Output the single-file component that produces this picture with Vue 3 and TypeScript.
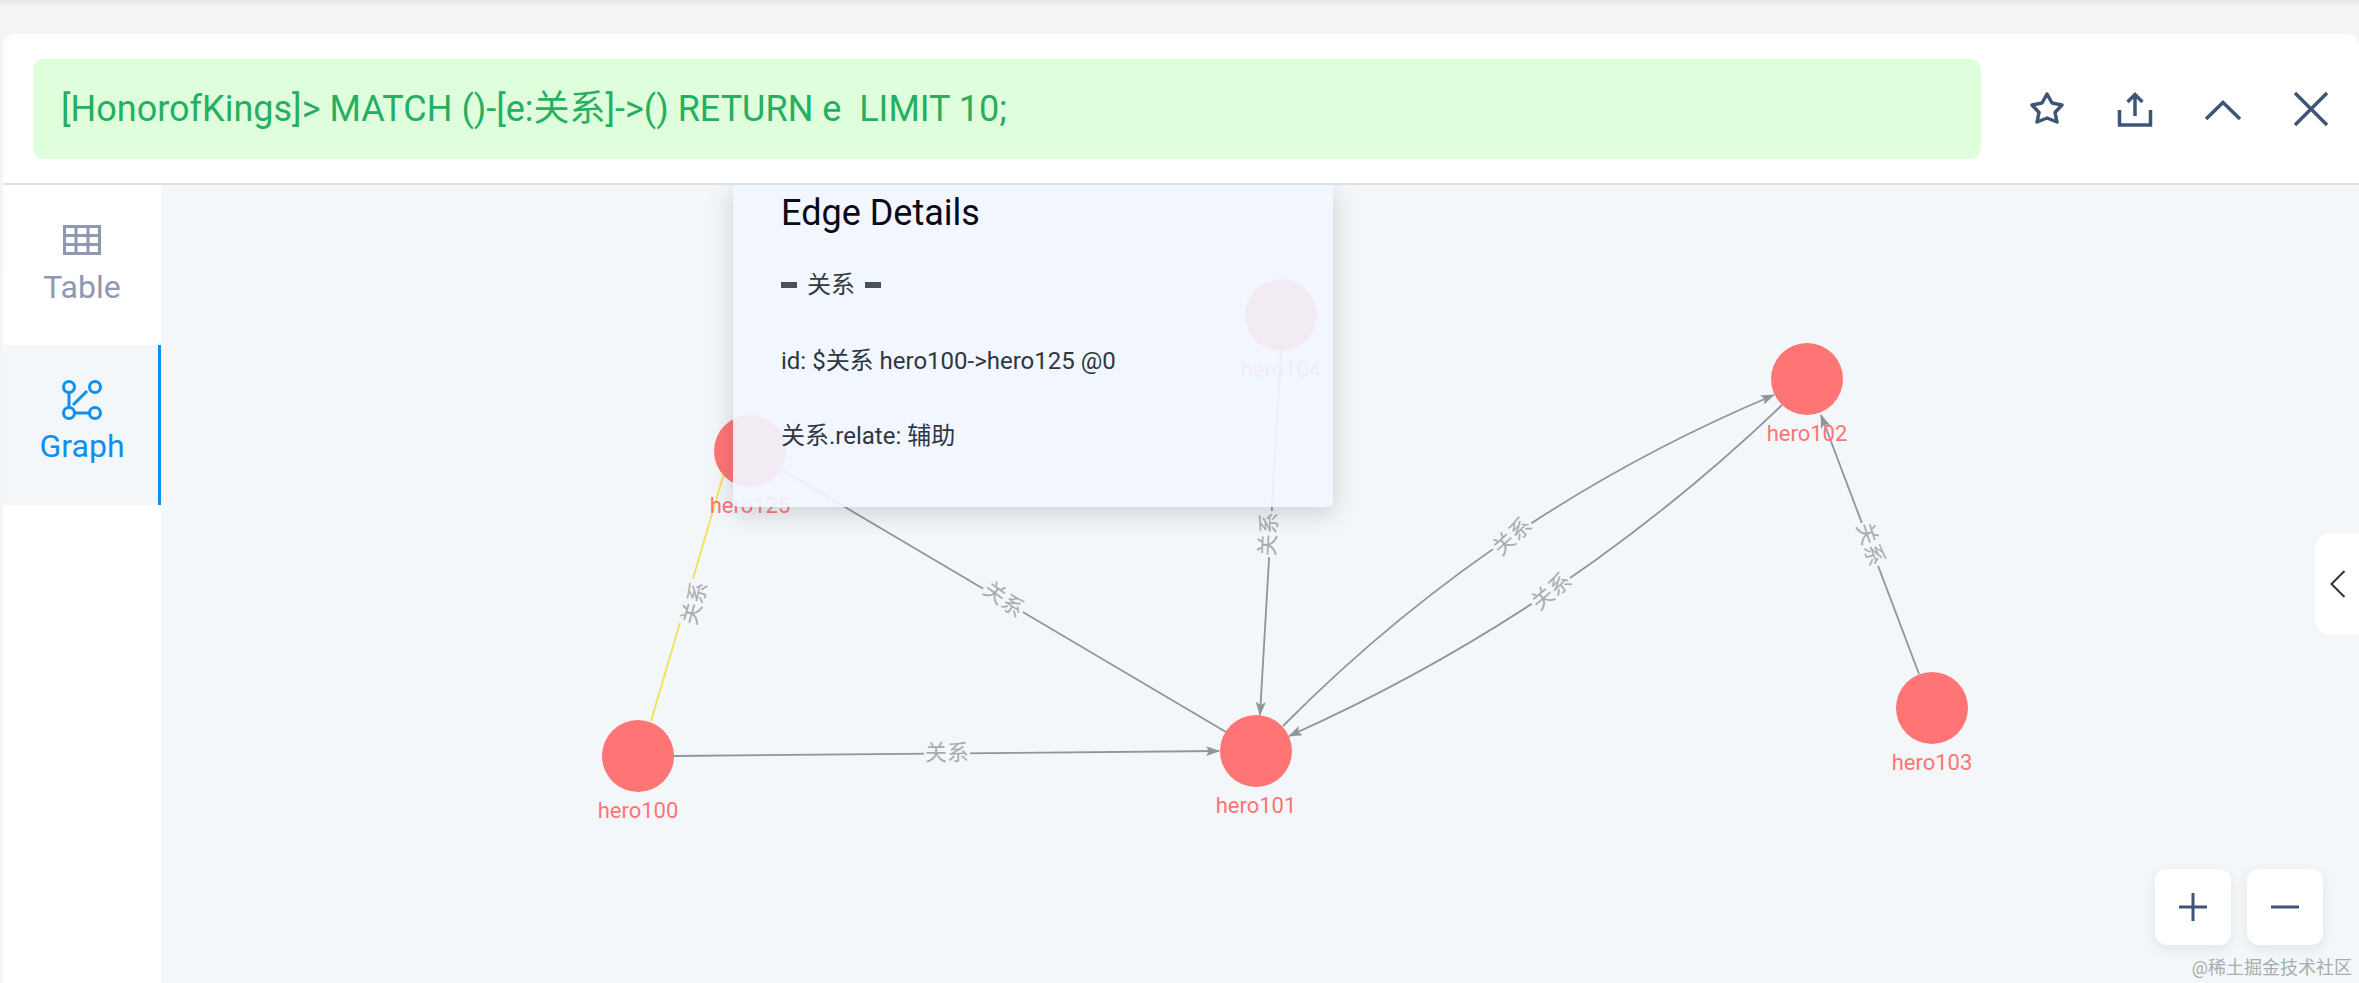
<script setup lang="ts">
interface GraphNode {
  name: string;
  x: number;
  y: number;
}

interface GraphEdge {
  d: string;
  color: string;
  arrow: boolean;
  lx: number;
  ly: number;
  angle: number;
}

// coordinates are page pixels, the svg group shifts them into the canvas
const nodes: GraphNode[] = [
  { name: 'hero125', x: 750, y: 452 },
  { name: 'hero104', x: 1281, y: 316 },
  { name: 'hero100', x: 638, y: 757 },
  { name: 'hero101', x: 1256, y: 752 },
  { name: 'hero102', x: 1807, y: 380 },
  { name: 'hero103', x: 1932, y: 709 },
];

const edges: GraphEdge[] = [
  { d: 'M651 722L740 420', color: '#f5e050', arrow: false, lx: 694, ly: 604, angle: -74 },
  { d: 'M750 452L1226 733', color: '#8f9598', arrow: false, lx: 1004, ly: 600, angle: 36 },
  { d: 'M1281 352L1260 716', color: '#8f9598', arrow: true, lx: 1268, ly: 535, angle: -87 },
  { d: 'M674 757L1219 752', color: '#8f9598', arrow: true, lx: 947, ly: 753, angle: 0 },
  { d: 'M1283 727Q1495 513 1774 396', color: '#8f9598', arrow: true, lx: 1512, ly: 537, angle: -42 },
  { d: 'M1782 406Q1566 613 1289 737', color: '#8f9598', arrow: true, lx: 1551, ly: 592, angle: -40 },
  { d: 'M1919 675L1821 416', color: '#8f9598', arrow: true, lx: 1871, ly: 545, angle: 72 },
];
</script>

<template>
  <div class="page">
    <div class="card">
      <header class="query-bar">
        <div class="query">[HonorofKings]&gt; MATCH ()-[e:关系]-&gt;() RETURN e&nbsp; LIMIT 10;</div>
        <div class="actions">
          <svg width="36" height="36" viewBox="0 0 36 36" class="act">
            <path d="M18 3l5 9 10 2-7 7.500 2 9.500-10-4-10 4 2-9.500-7-7.500 10-2z" stroke-linejoin="round" />
          </svg>
          <svg width="36" height="36" viewBox="0 0 36 36" class="act">
            <path d="M18 25V4M10.500 11L18 3.500 25.500 11M2.500 19v15h31V19" />
          </svg>
          <svg width="36" height="36" viewBox="0 0 36 36" class="act">
            <path d="M1 28L18 11.500 35 28" />
          </svg>
          <svg width="36" height="36" viewBox="0 0 36 36" class="act">
            <path d="M2 2l32 32M34 2L2 34" />
          </svg>
        </div>
      </header>

      <div class="main">
        <nav class="side">
          <div class="tab">
            <svg width="38" height="30" viewBox="0 0 38 30" class="tab-icon">
              <path d="M1.500 1.500h35v27h-35zM1.500 10.500h35M1.500 19.500h35M13 1.500v27M25 1.500v27" fill="none" stroke="#8f98b3" stroke-width="3" />
            </svg>
            <span>Table</span>
          </div>
          <div class="tab active">
            <svg width="42" height="42" viewBox="0 0 42 42" class="tab-icon">
              <g fill="none" stroke="#0f8ff0" stroke-width="3">
                <path d="M8 14v14M12 26l14-14M14 34h14" />
                <circle cx="8" cy="8" r="5.500" />
                <circle cx="34" cy="8" r="5.500" />
                <circle cx="8" cy="34" r="5.500" />
                <circle cx="34" cy="34" r="5.500" />
              </g>
            </svg>
            <span>Graph</span>
          </div>
        </nav>

        <section class="canvas">
          <svg class="graph" width="2198" height="798" viewBox="0 0 2198 798">
            <defs>
              <marker id="arrow" markerWidth="14" markerHeight="10" refX="13" refY="5" orient="auto" markerUnits="userSpaceOnUse">
                <path d="M0 0L14 5L0 10L3 5z" fill="#8f9598" />
              </marker>
            </defs>
            <g transform="translate(-161 -186)">
              <g v-for="(edge, i) in edges" :key="i">
                <path
                  :d="edge.d"
                  fill="none"
                  :stroke="edge.color"
                  stroke-width="1.800"
                  :marker-end="edge.arrow ? 'url(#arrow)' : undefined"
                />
                <g :transform="`translate(${edge.lx} ${edge.ly}) rotate(${edge.angle})`">
                  <rect x="-23" y="-11" width="46" height="22" fill="#f3f7f9" />
                  <text class="edge-label" text-anchor="middle" y="8">关系</text>
                </g>
              </g>
              <g v-for="node in nodes" :key="node.name">
                <circle :cx="node.x" :cy="node.y" r="36" fill="#ff7474" />
                <text class="node-label" :x="node.x" :y="node.y + 62" text-anchor="middle">{{ node.name }}</text>
              </g>
            </g>
          </svg>

          <aside class="details">
            <h2>Edge Details</h2>
            <div class="edge-type"><i></i>关系<i></i></div>
            <p class="id-line">id: $关系 hero100-&gt;hero125 @0</p>
            <p class="prop-line">关系.relate: 辅助</p>
          </aside>

          <div class="collapse">
            <svg width="16" height="28" viewBox="0 0 16 28">
              <path d="M14.500 1L1.500 14l13 13" fill="none" stroke="#333" stroke-width="2" />
            </svg>
          </div>

          <div class="zoom">
            <button>
              <svg width="30" height="30" viewBox="0 0 30 30"><path d="M1 15h28M15 1v28" /></svg>
            </button>
            <button>
              <svg width="30" height="30" viewBox="0 0 30 30"><path d="M1 15h28" /></svg>
            </button>
          </div>

          <div class="watermark">@稀土掘金技术社区</div>
        </section>
      </div>
    </div>
  </div>
</template>

<style>
html,
body {
  margin: 0;
  overflow: hidden;
}
</style>

<style scoped>
.page {
  height: 983px;
  box-sizing: border-box;
  padding: 34px 0 0 3px;
  background: linear-gradient(#e6e6e6 0, #f4f4f4 6px, #f5f5f5 100%);
  font-family: Roboto, "Noto Sans CJK SC", sans-serif;
  overflow: hidden;
}

.card {
  height: 949px;
  display: flex;
  flex-direction: column;
  background: #fff;
  border-radius: 12px 12px 0 0;
}

.query-bar {
  height: 151px;
  flex: none;
  box-sizing: border-box;
  display: flex;
  align-items: flex-start;
  padding: 25px 0 0 30px;
  border-bottom: 2px solid #dfe2e5;
}

.query {
  width: 1948px;
  height: 100px;
  box-sizing: border-box;
  display: flex;
  align-items: center;
  padding: 0 0 9px 28px;
  background: #dfffdc;
  border-radius: 10px;
  color: #27ae60;
  font-size: 36px;
  white-space: pre;
}

.actions {
  display: flex;
  gap: 52px;
  margin: 32px 0 0 48px;
}

.act {
  fill: none;
  stroke: #3f5578;
  stroke-width: 3.500;
}

.main {
  flex: 1;
  display: flex;
  min-height: 0;
}

.side {
  width: 158px;
  flex: none;
  background: #fff;
}

.tab {
  height: 160px;
  box-sizing: border-box;
  display: flex;
  flex-direction: column;
  align-items: center;
  padding-top: 40px;
  color: #8f98b3;
  font-size: 32px;
  line-height: 36px;
}

.tab.active {
  padding-top: 34px;
  background: #f3f7f9;
  color: #0f8ff0;
  box-shadow: inset -3px 0 0 #0f8ff0;
}

.tab-icon {
  margin-bottom: 14px;
}

.tab.active .tab-icon {
  margin-bottom: 7px;
}

.canvas {
  flex: 1;
  position: relative;
  background: #f3f7f9;
  overflow: hidden;
}

.graph {
  position: absolute;
  left: 0;
  top: 0;
}

.edge-label {
  fill: #a8acb0;
  font-size: 22px;
}

.node-label {
  fill: #ff7474;
  font-size: 22px;
}

.details {
  position: absolute;
  left: 572px;
  top: 0;
  width: 600px;
  height: 322px;
  box-sizing: border-box;
  padding-left: 48px;
  background: rgba(242, 245, 255, 0.92);
  border-radius: 0 0 6px 6px;
  box-shadow: 0 6px 24px rgba(60, 70, 80, 0.22);
}

.details h2 {
  margin: 0;
  padding-top: 6px;
  font-size: 36px;
  font-weight: 400;
  line-height: 44px;
  color: #0a0a14;
}

.edge-type {
  display: flex;
  align-items: center;
  gap: 10px;
  margin-top: 34px;
  font-size: 24px;
  line-height: 32px;
  color: #333a44;
}

.edge-type i {
  width: 16px;
  height: 6px;
  background: #4a5058;
}

.id-line,
.prop-line {
  margin: 0;
  font-size: 24px;
  line-height: 32px;
  color: #2f3640;
}

.id-line {
  margin-top: 44px;
}

.prop-line {
  margin-top: 43px;
}

.collapse {
  position: absolute;
  right: 0;
  top: 348px;
  width: 44px;
  height: 102px;
  box-sizing: border-box;
  display: flex;
  align-items: center;
  padding-left: 15px;
  background: #fff;
  border-radius: 16px 0 0 16px;
}

.zoom {
  position: absolute;
  left: 1994px;
  top: 684px;
  display: flex;
  gap: 16px;
}

.zoom button {
  width: 76px;
  height: 76px;
  padding: 0;
  display: flex;
  align-items: center;
  justify-content: center;
  background: #fff;
  border: none;
  border-radius: 12px;
  box-shadow: 0 4px 12px rgba(60, 70, 80, 0.1);
}

.zoom path {
  fill: none;
  stroke: #3f5578;
  stroke-width: 3;
}

.watermark {
  position: absolute;
  right: 7px;
  top: 770px;
  font-size: 18px;
  line-height: 26px;
  color: #a8acae;
  white-space: nowrap;
}
</style>
